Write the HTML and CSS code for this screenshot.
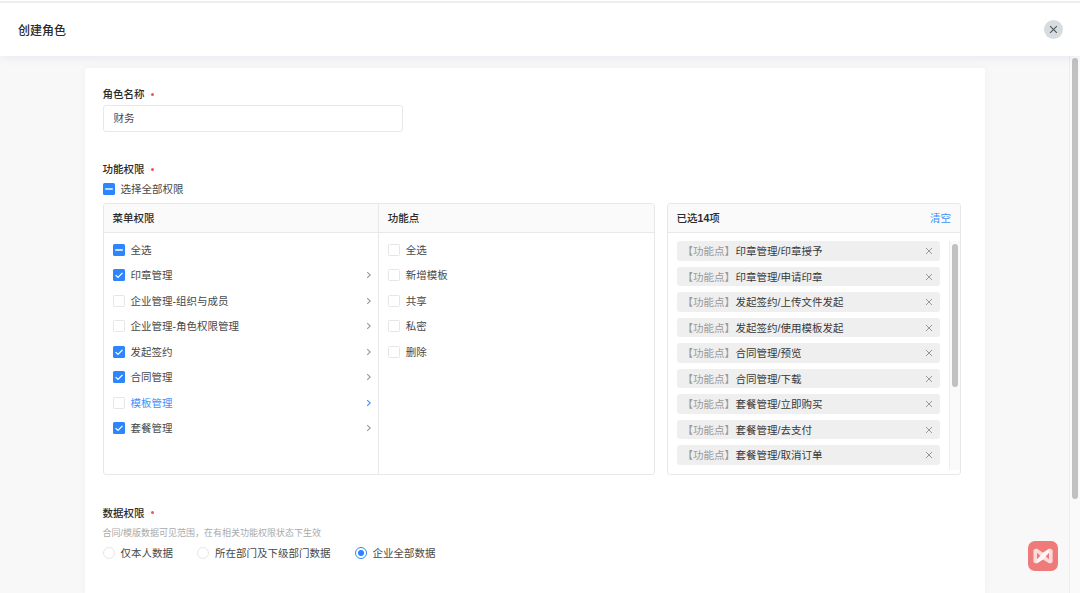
FILE: index.html
```html
<!DOCTYPE html>
<html lang="zh-CN">
<head>
<meta charset="utf-8">
<title>创建角色</title>
<link rel="stylesheet" href="styles.css">
</head>
<body>
<svg class="defs" width="0" height="0" aria-hidden="true">
  <symbol id="check" viewBox="0 0 12 12"><path d="M2.6 6.1 5 8.4 9.5 3.9" fill="none" stroke="#fff" stroke-width="1.3"/></symbol>
  <symbol id="minus" viewBox="0 0 12 12"><path d="M2.2 6H9.8" fill="none" stroke="#fff" stroke-width="1.4"/></symbol>
  <symbol id="arrow" viewBox="0 0 6 8"><path d="M1.2 1.2 4.2 4 1.2 6.8" fill="none" stroke="currentColor" stroke-width="1.1"/></symbol>
  <symbol id="cross" viewBox="0 0 8 8"><path d="M1 1 7 7M7 1 1 7" fill="none" stroke="currentColor" stroke-width="1"/></symbol>
</svg>
<header class="topbar">
  <h1 class="title">创建角色</h1>
  <button class="close" aria-label="关闭"><svg width="9" height="9"><use href="#cross"/></svg></button>
</header>
<main class="page">
  <div class="card">
    <section class="field field-name">
      <h2 class="label">角色名称<i class="req"></i></h2>
      <div class="input">财务</div>
    </section>
    <section class="field field-perm">
      <h2 class="label">功能权限<i class="req"></i></h2>
      <div class="opt all"><span class="box on"><svg><use href="#minus"/></svg></span>选择全部权限</div>
      <div class="panels">
        <div class="panel tree">
          <div class="col">
            <div class="head">菜单权限</div>
            <div class="rows">
              <div class="opt"><span class="box on"><svg><use href="#minus"/></svg></span>全选</div>
              <div class="opt"><span class="box on"><svg><use href="#check"/></svg></span>印章管理<svg class="arrow"><use href="#arrow"/></svg></div>
              <div class="opt"><span class="box"></span>企业管理-组织与成员<svg class="arrow"><use href="#arrow"/></svg></div>
              <div class="opt"><span class="box"></span>企业管理-角色权限管理<svg class="arrow"><use href="#arrow"/></svg></div>
              <div class="opt"><span class="box on"><svg><use href="#check"/></svg></span>发起签约<svg class="arrow"><use href="#arrow"/></svg></div>
              <div class="opt"><span class="box on"><svg><use href="#check"/></svg></span>合同管理<svg class="arrow"><use href="#arrow"/></svg></div>
              <div class="opt active"><span class="box"></span>模板管理<svg class="arrow"><use href="#arrow"/></svg></div>
              <div class="opt"><span class="box on"><svg><use href="#check"/></svg></span>套餐管理<svg class="arrow"><use href="#arrow"/></svg></div>
            </div>
          </div>
          <div class="col">
            <div class="head">功能点</div>
            <div class="rows">
              <div class="opt"><span class="box"></span>全选</div>
              <div class="opt"><span class="box"></span>新增模板</div>
              <div class="opt"><span class="box"></span>共享</div>
              <div class="opt"><span class="box"></span>私密</div>
              <div class="opt"><span class="box"></span>删除</div>
            </div>
          </div>
        </div>
        <div class="panel chosen">
          <div class="head"><span>已选<b>14</b>项</span><a class="clear">清空</a></div>
          <div class="chosen-body">
            <div class="tags">
              <div class="tag"><span class="kind">【功能点】</span>印章管理/印章授予<svg class="x"><use href="#cross"/></svg></div>
              <div class="tag"><span class="kind">【功能点】</span>印章管理/申请印章<svg class="x"><use href="#cross"/></svg></div>
              <div class="tag"><span class="kind">【功能点】</span>发起签约/上传文件发起<svg class="x"><use href="#cross"/></svg></div>
              <div class="tag"><span class="kind">【功能点】</span>发起签约/使用模板发起<svg class="x"><use href="#cross"/></svg></div>
              <div class="tag"><span class="kind">【功能点】</span>合同管理/预览<svg class="x"><use href="#cross"/></svg></div>
              <div class="tag"><span class="kind">【功能点】</span>合同管理/下载<svg class="x"><use href="#cross"/></svg></div>
              <div class="tag"><span class="kind">【功能点】</span>套餐管理/立即购买<svg class="x"><use href="#cross"/></svg></div>
              <div class="tag"><span class="kind">【功能点】</span>套餐管理/去支付<svg class="x"><use href="#cross"/></svg></div>
              <div class="tag"><span class="kind">【功能点】</span>套餐管理/取消订单<svg class="x"><use href="#cross"/></svg></div>
            </div>
            <div class="track"><div class="thumb"></div></div>
          </div>
        </div>
      </div>
    </section>
    <section class="field">
      <h2 class="label">数据权限<i class="req"></i></h2>
      <p class="hint">合同/模版数据可见范围，在有相关功能权限状态下生效</p>
      <div class="radios">
        <div class="opt"><span class="radio"></span>仅本人数据</div>
        <div class="opt"><span class="radio"></span>所在部门及下级部门数据</div>
        <div class="opt"><span class="radio on"></span>企业全部数据</div>
      </div>
    </section>
  </div>
  <div class="page-track"><div class="page-thumb"></div></div>
</main>
<div class="float">
  <svg width="30" height="30" viewBox="0 0 30 30">
    <path d="M5.5 9.4Q5.5 8.8 6.1 8.5L8.6 7.6 15 11.8 21.4 7.6 24 8.5Q24.6 8.8 24.6 9.4V20.8Q24.6 21.4 24 21.7L21.4 22.6 15 18.4 8.6 22.6 6.1 21.7Q5.5 21.4 5.5 20.8Z" fill="#fbdcdc"/>
    <path d="M9 11.8 12.6 15 9 18.4ZM21 11.8V18.4L17.4 15Z" fill="#ef7a7a"/>
    <path d="M8.6 22.6 9 18.4 15 11.8 21.4 7.6 21 11.8 15 18.4Z" fill="#fff" opacity=".75"/>
  </svg>
</div>
</body>
</html>
```
FILE: styles.css
```css
* { box-sizing: border-box; }

body {
  margin: 0;
  height: 593px;
  overflow: hidden;
  display: flex;
  flex-direction: column;
  background: #f8f8f8;
  color: #484848;
  font: 10.5px/16px "Liberation Sans", "Noto Sans CJK SC", sans-serif;
}

h1, h2, p { margin: 0; }
svg { display: block; flex: none; }
.defs { position: absolute; }

.topbar {
  position: relative;
  flex: none;
  display: flex;
  align-items: center;
  justify-content: space-between;
  height: 56px;
  padding: 3px 17px 0 18px;
  background: linear-gradient(#fff 1px, #eee 1px, #eee 3px, #fff 3px);
  box-shadow: 0 3px 8px rgba(80, 100, 180, .08);
}
.title { font-size: 12px; line-height: 18px; font-weight: 500; color: #2a2a2a; padding-top: 2px; }
.close {
  display: grid;
  place-items: center;
  width: 19px;
  height: 19px;
  padding: 0;
  border: 0;
  border-radius: 50%;
  background: #d6dce0;
  color: #555;
}

.page { flex: 1; display: flex; min-height: 0; padding-left: 85px; }
.card {
  width: 900px;
  margin-top: 12px;
  padding: 18px 18px 0 17.6px;
  background: #fff;
  border-radius: 3px 3px 0 0;
  box-shadow: 0 0 8px rgba(0, 0, 0, .04);
}
.page-track {
  width: 11px;
  margin-left: auto;
  padding: 2px 2px 0;
  border-left: 1px solid #eee;
  background: #fafafa;
}
.page-thumb { width: 6px; height: 441px; border-radius: 3px; background: #c1c1c1; }

.label { display: flex; align-items: center; font-size: 10.5px; line-height: 16px; font-weight: 500; color: #2a2a2a; }
.req { width: 3px; height: 3px; margin-left: 6.5px; border-radius: 50%; background: #ff4d4f; }
.field-name { height: 75px; }
.input {
  width: 300.5px;
  height: 26.5px;
  margin-top: 3px;
  padding: 0 10px;
  line-height: 25px;
  border: 1px solid #e8e8e8;
  border-radius: 3px;
}
.field-perm { height: 343.5px; }

.opt { display: flex; align-items: center; height: 25.5px; }
.all { height: 20px; margin-top: 2px; }
.box, .radio { flex: none; width: 12px; height: 12px; margin-right: 6px; border: 1px solid #e6e6e6; }
.box { border-radius: 1.5px; }
.box.on { border: 0; background: #2e86ff; }
.box svg { width: 12px; height: 12px; }
.arrow { width: 6px; height: 8px; margin-left: auto; color: #999; }
.active, .active .arrow { color: #3d8fff; }

.panels { display: flex; gap: 12px; margin-top: 4px; }
.panel { height: 271.5px; border: 1px solid #e8e8e8; border-radius: 3px; overflow: hidden; }
.tree { display: flex; width: 552.5px; }
.col { flex: 1; }
.col + .col { border-left: 1px solid #e8e8e8; }
.head {
  display: flex;
  align-items: center;
  justify-content: space-between;
  height: 29px;
  padding: 0 9px;
  background: #fafafa;
  border-bottom: 1px solid #e8e8e8;
  font-weight: 500;
  color: #2a2a2a;
}
.rows { padding: 4px 6px 0 9px; }
.col + .col .head,
.col + .col .rows { padding-left: 8.5px; }

.chosen { width: 294px; }
.chosen .head { padding-left: 8.5px; }
.clear { font-weight: 400; color: #3d8fff; }
.chosen-body { display: flex; justify-content: space-between; height: 241px; }
.tags { width: 272px; padding: 8.3px 0 0 9px; display: flex; flex-direction: column; gap: 6px; }
.tag {
  display: flex;
  align-items: center;
  flex: none;
  height: 19.5px;
  padding: 0 7.5px 0 5.5px;
  border-radius: 3px;
  background: #efefef;
  color: #383838;
}
.kind { color: #999; margin-right: .5px; }
.x { width: 8px; height: 8px; margin-left: auto; color: #999; }
.track { width: 11px; margin: 8px 0 4px; padding: 3px 2px 0; border-left: 1px solid #eee; background: #fafafa; }
.thumb { width: 6px; height: 143px; border-radius: 3px; background: #c1c1c1; }

.hint { margin-top: 5px; font-size: 9px; line-height: 14px; color: #aaa; }
.radios { display: flex; gap: 24px; margin-top: 1px; }
.radio { border-radius: 50%; }
.radio.on {
  border-color: #2e86ff;
  background: radial-gradient(circle, #2e86ff 2.7px, #fff 3.4px);
}

.float {
  position: absolute;
  left: 1028px;
  top: 541px;
  width: 30px;
  height: 30px;
  border-radius: 7px;
  background: #ef7a7a;
}
```
